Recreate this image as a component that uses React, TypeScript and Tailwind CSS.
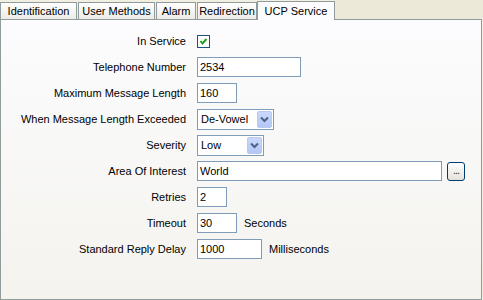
import { ReactNode } from 'react';

const font = { fontFamily: '"Liberation Sans", Arial, sans-serif' };

function Tab({ label, width, active }: { label: string; width: number; active?: boolean }) {
  if (active) {
    return (
      <div
        className="h-[19px] border border-b-0 border-[#919b9c] bg-[#fcfcfe] flex items-center justify-center text-[11px] text-black relative z-10 -mb-px"
        style={{ width }}
      >
        {label}
      </div>
    );
  }
  return (
    <div
      className="mt-px h-[17px] border border-b-0 border-[#919b9c] bg-gradient-to-b from-white to-[#ecebe6] flex items-center justify-center text-[11px] text-black"
      style={{ width }}
    >
      {label}
    </div>
  );
}

function TextBox({ value, w }: { value: string; w: string }) {
  return (
    <div className={`${w} h-[20px] border border-[#7f9db9] bg-white flex items-center px-[2px] text-[11px] text-black`}>
      {value}
    </div>
  );
}

function Select({ value, w }: { value: string; w: string }) {
  return (
    <div className={`${w} h-[21px] border border-[#7f9db9] bg-white flex items-center justify-between pl-[3px] pr-px text-[11px] text-black`}>
      <span>{value}</span>
      <div className="w-[15px] h-[17px] rounded-[2px] bg-gradient-to-b from-[#c9d8fc] to-[#b3c7f5] border border-[#b9c9ef] flex items-center justify-center">
        <svg width="9" height="7" viewBox="0 0 9 7">
          <path d="M1 1.5 L4.5 5 L8 1.5" fill="none" stroke="#4d6185" strokeWidth="2" />
        </svg>
      </div>
    </div>
  );
}

function Row({ label, children }: { label: string; children: ReactNode }) {
  return (
    <div className="h-[26px] flex items-center">
      <div className="w-[185px] text-right text-[11px] text-black shrink-0">{label}</div>
      <div className="pl-[11px] flex items-center gap-[7px] text-[11px] text-black">{children}</div>
    </div>
  );
}

export default function App() {
  return (
    <div className="w-[483px] h-[300px] bg-[#f1efe2] overflow-hidden" style={font}>
      <div className="flex items-end h-[19px]">
        <Tab label="Identification" width={77} />
        <div className="w-px" />
        <Tab label="User Methods" width={77} />
        <div className="w-px" />
        <Tab label="Alarm" width={40} />
        <div className="w-px" />
        <Tab label="Redirection" width={60} />
        <Tab label="UCP Service" width={78} active />
        <div className="flex-1 h-[19px] bg-[#ece9d8]" />
      </div>
      <div className="h-[281px] w-[482px] border border-[#919b9c] bg-gradient-to-b from-[#fcfcfe] to-[#f4f3ee] pt-[8px]">
        <Row label="In Service">
          <div className="w-[13px] h-[13px] border border-[#1c5180] bg-white flex items-center justify-center">
            <svg width="9" height="9" viewBox="0 0 9 9">
              <path d="M1.5 4 L3.5 6.5 L7.5 2" fill="none" stroke="#21a121" strokeWidth="2" />
            </svg>
          </div>
        </Row>
        <Row label="Telephone Number">
          <TextBox value="2534" w="w-[104px]" />
        </Row>
        <Row label="Maximum Message Length">
          <TextBox value="160" w="w-[40px]" />
        </Row>
        <Row label="When Message Length Exceeded">
          <Select value="De-Vowel" w="w-[77px]" />
        </Row>
        <Row label="Severity">
          <Select value="Low" w="w-[67px]" />
        </Row>
        <Row label="Area Of Interest">
          <TextBox value="World" w="w-[245px]" />
          <div className="ml-[-2px] w-[18px] h-[19px] rounded-[3px] border border-[#003c74] bg-gradient-to-b from-white to-[#e3e2da] flex items-end justify-center pb-[4px]">
            <span className="text-[11px] leading-none tracking-[-1px] text-[#333]">...</span>
          </div>
        </Row>
        <Row label="Retries">
          <TextBox value="2" w="w-[30px]" />
        </Row>
        <Row label="Timeout">
          <TextBox value="30" w="w-[40px]" />
          <span>Seconds</span>
        </Row>
        <Row label="Standard Reply Delay">
          <TextBox value="1000" w="w-[65px]" />
          <span>Milliseconds</span>
        </Row>
      </div>
    </div>
  );
}
